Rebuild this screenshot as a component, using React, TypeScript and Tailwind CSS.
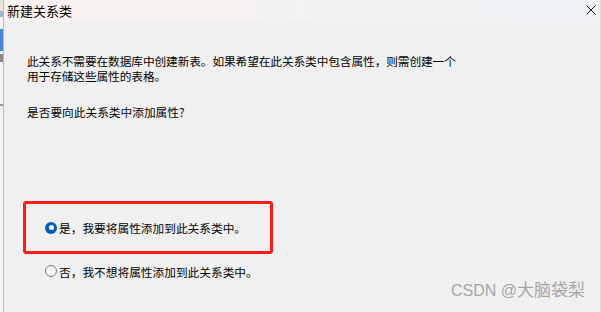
const cjk = { fontFamily: '"Noto Sans CJK SC", "Noto Sans", sans-serif' };

function Radio({ checked }: { checked: boolean }) {
  return checked ? (
    <span className="flex h-[12px] w-[12px] shrink-0 items-center justify-center rounded-full bg-[#005fb8]">
      <span className="h-[5px] w-[5px] rounded-full bg-white" />
    </span>
  ) : (
    <span className="h-[12px] w-[12px] shrink-0 rounded-full border border-[#7a7a7a] bg-[#f6f6f6]" />
  );
}

function BackgroundStrip() {
  // sliver of the window behind the dialog
  return (
    <div className="flex w-[3px] shrink-0 flex-col bg-[#f4f4f4]">
      <div className="h-[11px] bg-[#ece2d8]" />
      <div className="h-[6px] bg-[#9fb3cc]" />
      <div className="h-[12px]" />
      <div className="h-[22px] bg-[#4b86cf]" />
      <div className="h-[3px]" />
      <div className="h-[8px] bg-[#8a8a8a]" />
      <div className="h-[42px]" />
      <div className="h-[2px] bg-[#9a9a9a]" />
    </div>
  );
}

export default function App() {
  return (
    <div className="relative flex h-[312px] w-[601px] overflow-hidden bg-[#f0f0f0]" style={cjk}>
      <BackgroundStrip />
      <div className="w-px shrink-0 bg-[#b9b9b9]" />
      <div className="flex min-w-0 flex-1 flex-col border-r border-[#dcdcdc]">
        <div className="flex h-[22px] items-center justify-between bg-gradient-to-r from-[#faf2ee] to-[#eef3f6] pb-[2px] pl-[3px] pr-[4px]">
          <span className="text-[13px] leading-none text-black">新建关系类</span>
          <svg width="10" height="10" viewBox="0 0 10 10" className="mt-[-1px]">
            <path d="M0.5 0.5 L9.5 9.5 M9.5 0.5 L0.5 9.5" stroke="#1a1a1a" strokeWidth="1" />
          </svg>
        </div>

        <div className="flex flex-1 flex-col pl-[23px] pt-[31px] text-[11.7px] leading-[15px] text-black">
          <p className="tracking-[-0.1px]">
            此关系不需要在数据库中创建新表。如果希望在此关系类中包含属性，则需创建一个
            <br />
            用于存储这些属性的表格。
          </p>
          <p className="mt-[21px]">是否要向此关系类中添加属性?</p>

          <div className="-ml-[4px] mt-[82px] flex h-[53px] w-[250px] items-center rounded-[3px] border-[3px] border-[#ff1b1b] pl-[19px]">
            <Radio checked />
            <span className="ml-[2px]">是，我要将属性添加到此关系类中。</span>
          </div>

          <div className="ml-[18px] mt-[9px] flex h-[16px] items-center">
            <Radio checked={false} />
            <span className="ml-[2px]">否，我不想将属性添加到此关系类中。</span>
          </div>
        </div>
      </div>

      <div className="absolute bottom-[9px] right-[16px] flex items-baseline text-[#a6a6a6]">
        <span className="text-[16px]" style={{ fontFamily: '"Liberation Sans", Arial, sans-serif' }}>
          CSDN @
        </span>
        <span className="text-[17px]">大脑袋梨</span>
      </div>
    </div>
  );
}
